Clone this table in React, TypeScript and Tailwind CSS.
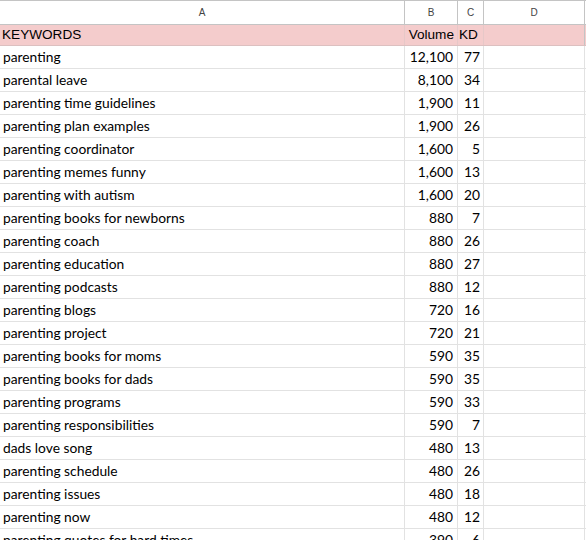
const rows: [string, string, string][] = [
  ["parenting", "12,100", "77"],
  ["parental leave", "8,100", "34"],
  ["parenting time guidelines", "1,900", "11"],
  ["parenting plan examples", "1,900", "26"],
  ["parenting coordinator", "1,600", "5"],
  ["parenting memes funny", "1,600", "13"],
  ["parenting with autism", "1,600", "20"],
  ["parenting books for newborns", "880", "7"],
  ["parenting coach", "880", "26"],
  ["parenting education", "880", "27"],
  ["parenting podcasts", "880", "12"],
  ["parenting blogs", "720", "16"],
  ["parenting project", "720", "21"],
  ["parenting books for moms", "590", "35"],
  ["parenting books for dads", "590", "35"],
  ["parenting programs", "590", "33"],
  ["parenting responsibilities", "590", "7"],
  ["dads love song", "480", "13"],
  ["parenting schedule", "480", "26"],
  ["parenting issues", "480", "18"],
  ["parenting now", "480", "12"],
  ["parenting quotes for hard times", "390", "6"],
];

const cols = "grid grid-cols-[405px_53px_26px_101px]";

export default function App() {
  return (
    <div className="w-[586px] h-[540px] overflow-hidden bg-white text-black">
      {/* column letters */}
      <div
        className={`${cols} h-[25px] border-t border-b border-[#c4c4c4] text-[10px] text-[#444] font-['Liberation_Sans',Arial,sans-serif]`}
      >
        {["A", "B", "C", "D"].map((c) => (
          <div key={c} className="border-r border-[#c4c4c4] flex items-center justify-center">
            {c}
          </div>
        ))}
      </div>

      {/* header row */}
      <div
        className={`${cols} h-[21px] bg-[#f4cccc] border-b border-[#dcc0c0] text-[13.6px] font-['Liberation_Sans',Arial,sans-serif]`}
      >
        <div className="border-r border-[#e6c8c8] flex items-center pl-[2px]">KEYWORDS</div>
        <div className="border-r border-[#e6c8c8] flex items-center justify-end pr-[3px]">Volume</div>
        <div className="border-r border-[#e6c8c8] flex items-center pl-[1px]">KD</div>
        <div className="border-r border-[#c4c4c4]" />
      </div>

      {/* data */}
      {rows.map(([kw, vol, kd]) => (
        <div
          key={kw}
          className={`${cols} h-[23px] border-b border-[#e2e2e2] text-[13.8px] leading-none font-['Lato','Open_Sans',sans-serif]`}
        >
          <div className="border-r border-[#e2e2e2] flex items-center pl-[3px] whitespace-nowrap overflow-hidden">
            {kw}
          </div>
          <div className="border-r border-[#e2e2e2] flex items-center justify-end pr-[4px]">{vol}</div>
          <div className="border-r border-[#e2e2e2] flex items-center justify-end pr-[3px]">{kd}</div>
          <div className="border-r border-[#e2e2e2]" />
        </div>
      ))}
    </div>
  );
}
